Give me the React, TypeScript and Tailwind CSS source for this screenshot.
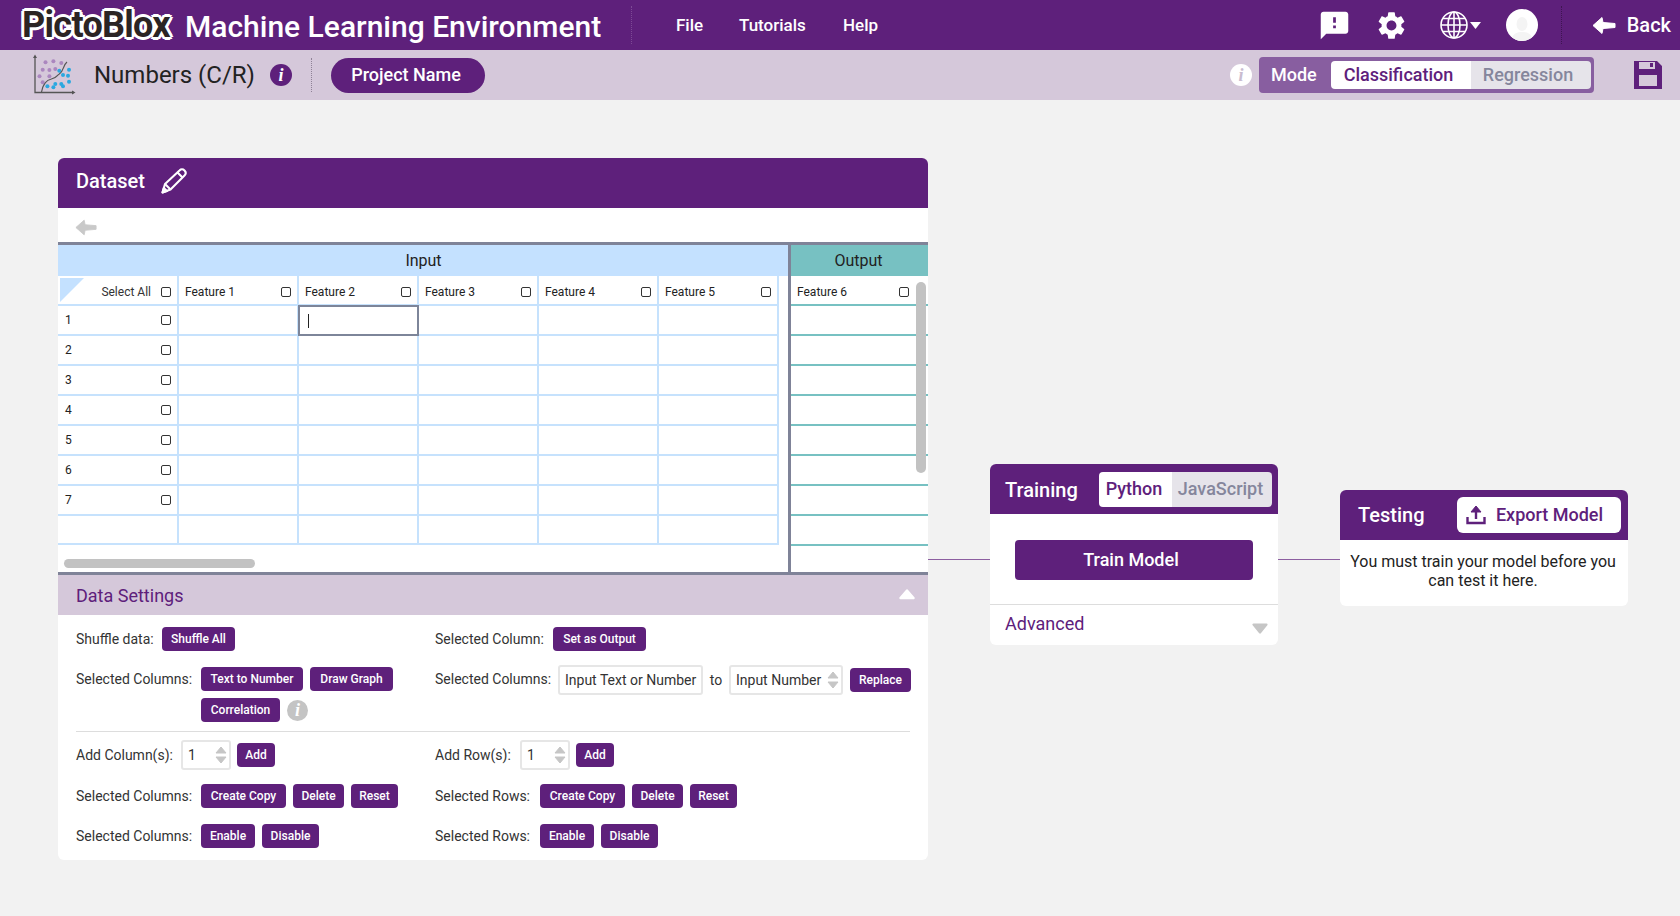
import React from "react";
import { MdFeedback, MdSettings } from "react-icons/md";

function Info({ light = false, grey = false, size = "w-[22px] h-[22px]" }: { light?: boolean; grey?: boolean; size?: string }) {
  const cls = grey
    ? "bg-[#c4c4c4] text-white"
    : light
    ? "bg-white text-[#c9bcd0]"
    : "bg-[#5e207b] text-white";
  return (
    <span className={`${size} ${cls} shrink-0 rounded-full flex items-center justify-center font-['Liberation_Serif',serif] italic font-bold text-[18px] leading-none`}>
      i
    </span>
  );
}

function Btn({ children, w }: { children: React.ReactNode; w: string }) {
  return (
    <button className={`${w} h-6 shrink-0 rounded bg-[#5e207b] text-white text-xs font-medium flex items-center justify-center`}>
      {children}
    </button>
  );
}

function Check() {
  return <span className="w-[10px] h-[10px] shrink-0 rounded-[2px] border border-[#333] bg-white" />;
}

function Spinner() {
  return (
    <svg width="12" height="18" viewBox="0 0 12 18" className="shrink-0">
      <path d="M6 1 L11 7 L1 7 Z" fill="#c6c6c6" stroke="#c6c6c6" strokeLinejoin="round" />
      <path d="M1 11 L11 11 L6 17 Z" fill="#c6c6c6" stroke="#c6c6c6" strokeLinejoin="round" />
    </svg>
  );
}

function NumBox({ w = "w-[50px]", text = "1" }: { w?: string; text?: string }) {
  return (
    <div className={`${w} h-[30px] shrink-0 border-2 border-[#e6e6e6] rounded-[3px] flex items-center justify-between pl-[5px] pr-[2px] text-sm text-[#333]`}>
      <span>{text}</span>
      <Spinner />
    </div>
  );
}

function Label({ children, w }: { children: React.ReactNode; w: string }) {
  return <span className={`${w} shrink-0 text-sm text-[#333] whitespace-nowrap`}>{children}</span>;
}

function ChunkyArrow({ color, w, h }: { color: string; w: number; h: number }) {
  return (
    <svg width={w} height={h} viewBox="0 0 24 18">
      <path d="M1 9 L10 1 L11 6 L23 7 L23 11 L11 12 L10 17 Z" fill={color} stroke={color} strokeLinejoin="round" />
    </svg>
  );
}

function Scatter() {
  const purple = [[13.5,8.3],[21.4,7.3],[29.3,9],[10.7,15.7],[17.4,16],[23.3,15],[7.5,22.3],[17.4,22.3],[10.7,28.3]];
  const blue = [[37,15.7],[36,21.7],[37,27.7],[31,21],[29.3,30],[23.3,30],[15.4,32.3],[21.4,33.3],[31,32.3],[27.3,16.7]];
  return (
    <svg width="44" height="42" viewBox="0 0 44 42" className="shrink-0">
      <path d="M3 2 V38.5 H42" stroke="#555" strokeWidth="1.3" fill="none" />
      <path d="M1 4 L3 0.5 L5 4 Z M40 36.5 L43.5 38.5 L40 40.5 Z" fill="#555" />
      <path d="M9.5 38 C11 30 14 26 19.4 25 C25 24 25 21 27.3 20 C32 17 31 11 35 8" stroke="#555" strokeWidth="1.2" fill="none" />
      {purple.map(([x, y], i) => <circle key={i} cx={x} cy={y} r="2" fill="#ab87bf" />)}
      {blue.map(([x, y], i) => <circle key={i} cx={x} cy={y} r="2" fill="#2ba8e0" />)}
    </svg>
  );
}

function Globe() {
  return (
    <svg width="28" height="28" viewBox="0 0 28 28" fill="none" stroke="white" strokeWidth="1.6">
      <circle cx="14" cy="14" r="13" />
      <ellipse cx="14" cy="14" rx="6" ry="13" />
      <path d="M14 1 V27 M1 14 H27 M3 7.5 H25 M3 20.5 H25" />
    </svg>
  );
}

function Pencil() {
  return (
    <svg width="26" height="26" viewBox="0 0 26 26" fill="none" stroke="white" strokeWidth="2.1" strokeLinejoin="round">
      <path d="M1.5 24.5 L4 16 L18.5 2.5 C20 1 22 1 23.5 2.5 C25 4 25 6 23.5 7.5 L9.5 21.5 Z" />
      <path d="M4 16 L9.5 21.5 M16.5 4.5 L21.5 9.5" />
      <path d="M1.5 24.5 L2.8 20 L6 23 Z" fill="white" />
    </svg>
  );
}

function Floppy() {
  return (
    <svg width="28" height="28" viewBox="0 0 28 28" className="shrink-0">
      <path fillRule="evenodd" fill="#5e207b" d="M0 0 H23 L28 5 V28 H0 Z M5 1 V8 H21 V1 Z M5 14 V25 H23 V14 Z" />
      <rect x="16" y="2" width="3" height="4" fill="#5e207b" />
    </svg>
  );
}

const cols = ["Feature 1", "Feature 2", "Feature 3", "Feature 4", "Feature 5"];
const rows = ["1", "2", "3", "4", "5", "6", "7", ""];
const line = "border-[#c6e2fd]";

function InputTable() {
  return (
    <div className="w-[730px] shrink-0">
      <div className="h-[31px] bg-[#c4e1ff] flex items-center justify-center pl-[1px] text-base text-[#222]">Input</div>
      <div className="flex h-[30px]">
        <div className={`w-[121px] border-r-2 border-b-2 ${line} flex items-center justify-end gap-[10px] pr-[6px] pt-[3px] relative`}>
          <svg width="24" height="24" viewBox="0 0 24 24" className="absolute left-[2px] top-[2px]">
            <path d="M0 0 H24 L0 24 Z" fill="#c4e1ff" />
          </svg>
          <span className="text-xs text-[#333]">Select All</span>
          <Check />
        </div>
        {cols.map((c) => (
          <div key={c} className={`w-[120px] border-r-2 border-b-2 ${line} flex items-center justify-between pl-[6px] pr-[6px] pt-[3px]`}>
            <span className="text-xs text-[#222]">{c}</span>
            <Check />
          </div>
        ))}
      </div>
      {rows.map((r, i) => (
        <div key={i} className="flex h-[30px] last:h-[29px]">
          <div className={`w-[121px] border-r-2 border-b-2 ${line} flex items-center justify-between pl-[7px] pr-[6px]`}>
            <span className="text-xs text-[#222]">{r}</span>
            {r && <Check />}
          </div>
          {cols.map((c, j) =>
            i === 0 && j === 1 ? (
              <div key={c} className="w-[121px] -ml-px -mt-px border-2 border-[#7d8599] flex items-center pl-[8px]">
                <span className="w-px h-[14px] bg-[#222]" />
              </div>
            ) : (
              <div key={c} className={`w-[120px] border-r-2 border-b-2 ${line}`} />
            )
          )}
        </div>
      ))}
    </div>
  );
}

function OutputTable() {
  return (
    <div className="flex-1 relative">
      <div className="h-[31px] bg-[#77c1c2] flex items-center justify-center pr-[2px] text-base text-[#222]">Output</div>
      <div className="h-[30px] border-b-2 border-[#77c1c2] flex items-center justify-between pl-[6px] pr-[19px] pt-[3px]">
        <span className="text-xs text-[#222]">Feature 6</span>
        <Check />
      </div>
      {rows.map((r, i) => (
        <div key={i} className="h-[30px] last:h-[29px] border-b-2 border-[#77c1c2]" />
      ))}
      <div className="absolute right-[2px] top-[37px] w-[10px] h-[191px] rounded-full bg-[#c2c2c2]" />
    </div>
  );
}

function SettingsRow({ left, right, cls = "" }: { left: React.ReactNode; right: React.ReactNode; cls?: string }) {
  return (
    <div className={`grid grid-cols-[359px_1fr] items-center ${cls}`}>
      <div className="flex items-center">{left}</div>
      <div className="flex items-center">{right}</div>
    </div>
  );
}

export default function App() {
  return (
    <div className="min-h-[916px] bg-[#f2f2f2] font-[Roboto,sans-serif] overflow-hidden">
      {/* top bar */}
      <header className="h-[50px] bg-[#5e207b] flex items-center text-white pl-[22px] pr-[9px]">
        <span className="w-[152px] text-[36px] font-bold tracking-[-0.7px] text-[#2b2424] leading-none [text-shadow:2px_0_0_#fff,-2px_0_0_#fff,0_2px_0_#fff,0_-2px_0_#fff,2px_2px_0_#fff,-2px_-2px_0_#fff,2px_-2px_0_#fff,-2px_2px_0_#fff,3px_0_0_#fff,-3px_0_0_#fff,0_3px_0_#fff,0_-3px_0_#fff]">
          PictoBlox
        </span>
        <span className="ml-[11px] w-[418px] pt-[3px] text-[30px] font-medium leading-none whitespace-nowrap">Machine Learning Environment</span>
        <span className="ml-[28px] h-[38px] border-l border-dotted border-[#7d4a95]" />
        <nav className="flex items-center ml-[44px] pt-[2px] text-[17px] font-medium">
          <span className="w-[63px]">File</span>
          <span className="w-[104px]">Tutorials</span>
          <span>Help</span>
        </nav>
        <div className="ml-auto flex items-center">
          <MdFeedback className="w-[33px] h-[33px]" />
          <MdSettings className="ml-[24px] w-[33px] h-[33px]" />
          <span className="ml-[32px]"><Globe /></span>
          <svg width="11" height="7" viewBox="0 0 11 7" className="ml-[2px]"><path d="M0 0 H11 L5.5 7 Z" fill="white" /></svg>
          <span className="ml-[25px] w-8 h-8 rounded-full bg-white flex items-end justify-center overflow-hidden">
            <svg width="24" height="26" viewBox="0 0 24 26"><ellipse cx="12" cy="9" rx="5.5" ry="7" fill="#f4f4f4" /><path d="M1 26 C2 18 8 17 12 17 C16 17 22 18 23 26 Z" fill="#f4f4f4" /></svg>
          </span>
          <span className="ml-[23px] h-[38px] border-l border-dotted border-[#3d1550]" />
          <span className="ml-[30px]"><ChunkyArrow color="#fff" w={24} h={19} /></span>
          <span className="ml-[11px] text-[20px] font-medium">Back</span>
        </div>
      </header>

      {/* sub bar */}
      <div className="h-[50px] bg-[#d5c8da] flex items-center pl-[32px] pr-[18px]">
        <Scatter />
        <span className="ml-[18px] text-[24px] text-[#222] leading-none">Numbers (C/R)</span>
        <span className="ml-[15px]"><Info /></span>
        <span className="ml-[19px] h-[34px] border-l border-dotted border-[#8f8296]" />
        <span className="ml-[19px] w-[154px] h-[35px] pr-[4px] rounded-full bg-[#5e207b] text-white text-lg font-medium flex items-center justify-center">Project Name</span>
        <div className="ml-auto flex items-center">
          <Info light />
          <div className="ml-[7px] w-[335px] h-[36px] rounded bg-[#885ea0] flex items-center p-[3px] pl-[12px]">
            <span className="w-[60px] text-lg font-medium text-white">Mode</span>
            <span className="w-[140px] h-[28px] pr-[5px] rounded-l bg-white text-lg font-medium text-[#5e207b] flex items-center justify-center">Classification</span>
            <span className="w-[120px] h-[28px] pr-[6px] rounded-r bg-[#e6e4ea] text-lg font-medium text-[#85869c] flex items-center justify-center">Regression</span>
          </div>
          <span className="ml-[40px]"><Floppy /></span>
        </div>
      </div>

      <main className="flex items-start pl-[58px]">
        {/* dataset */}
        <section className="mt-[58px] w-[870px] shrink-0 rounded-[6px] bg-white overflow-hidden">
          <div className="h-[50px] bg-[#5e207b] flex items-center pl-[18px] pb-[4px] gap-[16px]">
            <span className="text-[20px] font-medium text-white">Dataset</span>
            <Pencil />
          </div>
          <div className="h-[34px] flex items-center pl-[17px] pt-[4px]">
            <ChunkyArrow color="#c9c9c9" w={22} h={17} />
          </div>
          <div className="border-y-[3px] border-[#7f8398] flex relative h-[333px]">
            <InputTable />
            <div className="w-[3px] shrink-0 bg-[#7f8398]" />
            <OutputTable />
            <div className="absolute left-[6px] bottom-[4px] w-[191px] h-[9px] rounded-full bg-[#c2c2c2]" />
          </div>
          <div className="h-[40px] bg-[#d5c8da] flex items-center justify-between pl-[18px] pr-[13px]">
            <span className="text-lg text-[#5e207b] pt-[2px]">Data Settings</span>
            <svg width="16" height="11" viewBox="0 0 16 11" className="-mt-[1px]"><path d="M8 1.5 L14.5 9 H1.5 Z" fill="white" stroke="white" strokeWidth="2.4" strokeLinejoin="round" /></svg>
          </div>
          <div className="pt-[12px] pb-[12px] px-[18px]">
            <SettingsRow
              left={<><Label w="w-[86px]">Shuffle data:</Label><Btn w="w-[73px]">Shuffle All</Btn></>}
              right={<><Label w="w-[118px]">Selected Column:</Label><Btn w="w-[93px]">Set as Output</Btn></>}
            />
            <div className="grid grid-cols-[359px_1fr] mt-[16px] h-[55px]">
              <div className="flex">
                <span className="w-[125px] shrink-0 text-sm text-[#333] h-6 flex items-center">Selected Columns:</span>
                <div className="w-[200px] flex flex-wrap gap-x-[7px] gap-y-[7px] content-start">
                  <Btn w="w-[102px]">Text to Number</Btn>
                  <Btn w="w-[83px]">Draw Graph</Btn>
                  <Btn w="w-[79px]">Correlation</Btn>
                  <span className="h-6 flex items-center"><Info grey size="w-[21px] h-[21px]" /></span>
                </div>
              </div>
              <div className="flex items-start">
                <span className="w-[123px] shrink-0 text-sm text-[#333] h-6 flex items-center">Selected Columns:</span>
                <div className="w-[145px] h-[30px] -mt-[2px] shrink-0 border-2 border-[#e6e6e6] rounded-[3px] flex items-center pl-[5px] text-sm text-[#333] whitespace-nowrap">Input Text or Number</div>
                <span className="w-[26px] h-6 mt-px shrink-0 text-sm text-[#333] flex items-center justify-center">to</span>
                <div className="-mt-[2px]"><NumBox w="w-[114px]" text="Input Number" /></div>
                <div className="ml-[7px] mt-px"><Btn w="w-[61px]">Replace</Btn></div>
              </div>
            </div>
            <div className="mt-[9px] border-t border-[#ddd] mb-[8px] w-[834px]" />
            <SettingsRow
              left={<><Label w="w-[105px]">Add Column(s):</Label><NumBox /><div className="ml-[6px]"><Btn w="w-[38px]">Add</Btn></div></>}
              right={<><Label w="w-[85px]">Add Row(s):</Label><NumBox /><div className="ml-[6px]"><Btn w="w-[38px]">Add</Btn></div></>}
            />
            <SettingsRow
              cls="mt-[14px]"
              left={<><Label w="w-[125px]">Selected Columns:</Label><div className="flex gap-[7px]"><Btn w="w-[85px]">Create Copy</Btn><Btn w="w-[51px]">Delete</Btn><Btn w="w-[47px]">Reset</Btn></div></>}
              right={<><Label w="w-[105px]">Selected Rows:</Label><div className="flex gap-[7px]"><Btn w="w-[85px]">Create Copy</Btn><Btn w="w-[51px]">Delete</Btn><Btn w="w-[47px]">Reset</Btn></div></>}
            />
            <SettingsRow
              cls="mt-[16px]"
              left={<><Label w="w-[125px]">Selected Columns:</Label><div className="flex gap-[7px]"><Btn w="w-[54px]">Enable</Btn><Btn w="w-[57px]">Disable</Btn></div></>}
              right={<><Label w="w-[105px]">Selected Rows:</Label><div className="flex gap-[7px]"><Btn w="w-[54px]">Enable</Btn><Btn w="w-[57px]">Disable</Btn></div></>}
            />
          </div>
        </section>

        <div className="mt-[459px] w-[62px] h-px bg-[#8c5ea0] shrink-0" />

        {/* training */}
        <section className="mt-[364px] w-[288px] shrink-0 rounded-[6px] bg-white overflow-hidden">
          <div className="h-[50px] bg-[#5e207b] flex items-center pl-[15px] pr-[6px] justify-between">
            <span className="text-[20px] font-medium text-white pt-[2px]">Training</span>
            <div className="flex h-[35px] rounded overflow-hidden text-lg font-medium">
              <span className="w-[73px] pr-[3px] bg-white text-[#5e207b] flex items-center justify-center">Python</span>
              <span className="w-[100px] pr-[3px] bg-[#e6e4ea] text-[#85869c] flex items-center justify-center">JavaScript</span>
            </div>
          </div>
          <div className="h-[91px] pt-[2px] border-b border-[#ddd] flex items-center pl-[25px]">
            <button className="w-[238px] h-[40px] pr-[6px] rounded bg-[#5e207b] text-white text-lg font-medium">Train Model</button>
          </div>
          <div className="h-[40px] flex items-center justify-between pl-[15px] pr-[10px]">
            <span className="text-lg text-[#5e207b] pb-[2px]">Advanced</span>
            <svg width="16" height="11" viewBox="0 0 16 11" className="mt-[6px]"><path d="M1.5 1.5 H14.5 L8 9.5 Z" fill="#c6c6c6" stroke="#c6c6c6" strokeWidth="2.2" strokeLinejoin="round" /></svg>
          </div>
        </section>

        <div className="mt-[459px] w-[62px] h-px bg-[#8c5ea0] shrink-0" />

        {/* testing */}
        <section className="mt-[390px] w-[288px] shrink-0 rounded-[6px] bg-white overflow-hidden">
          <div className="h-[50px] bg-[#5e207b] flex items-center justify-between pl-[18px] pr-[7px]">
            <span className="text-[20px] font-medium text-white">Testing</span>
            <span className="w-[164px] h-[36px] pr-[9px] rounded-md bg-white text-[#5e207b] text-lg font-medium flex items-center justify-center gap-[10px]">
              <svg width="20" height="20" viewBox="0 0 20 20" fill="none" stroke="#5e207b" strokeWidth="2.4">
                <path d="M1.5 12 V18 H18.5 V12" />
                <path d="M10 14 V4" />
                <path d="M5 7 L10 1 L15 7 Z" fill="#5e207b" strokeWidth="1" />
              </svg>
              Export Model
            </span>
          </div>
          <p className="pt-[12px] pb-[16px] pl-[7px] pr-[9px] text-center text-base leading-[19px] text-[#222]">
            You must train your model before you can test it here.
          </p>
        </section>
      </main>
    </div>
  );
}
